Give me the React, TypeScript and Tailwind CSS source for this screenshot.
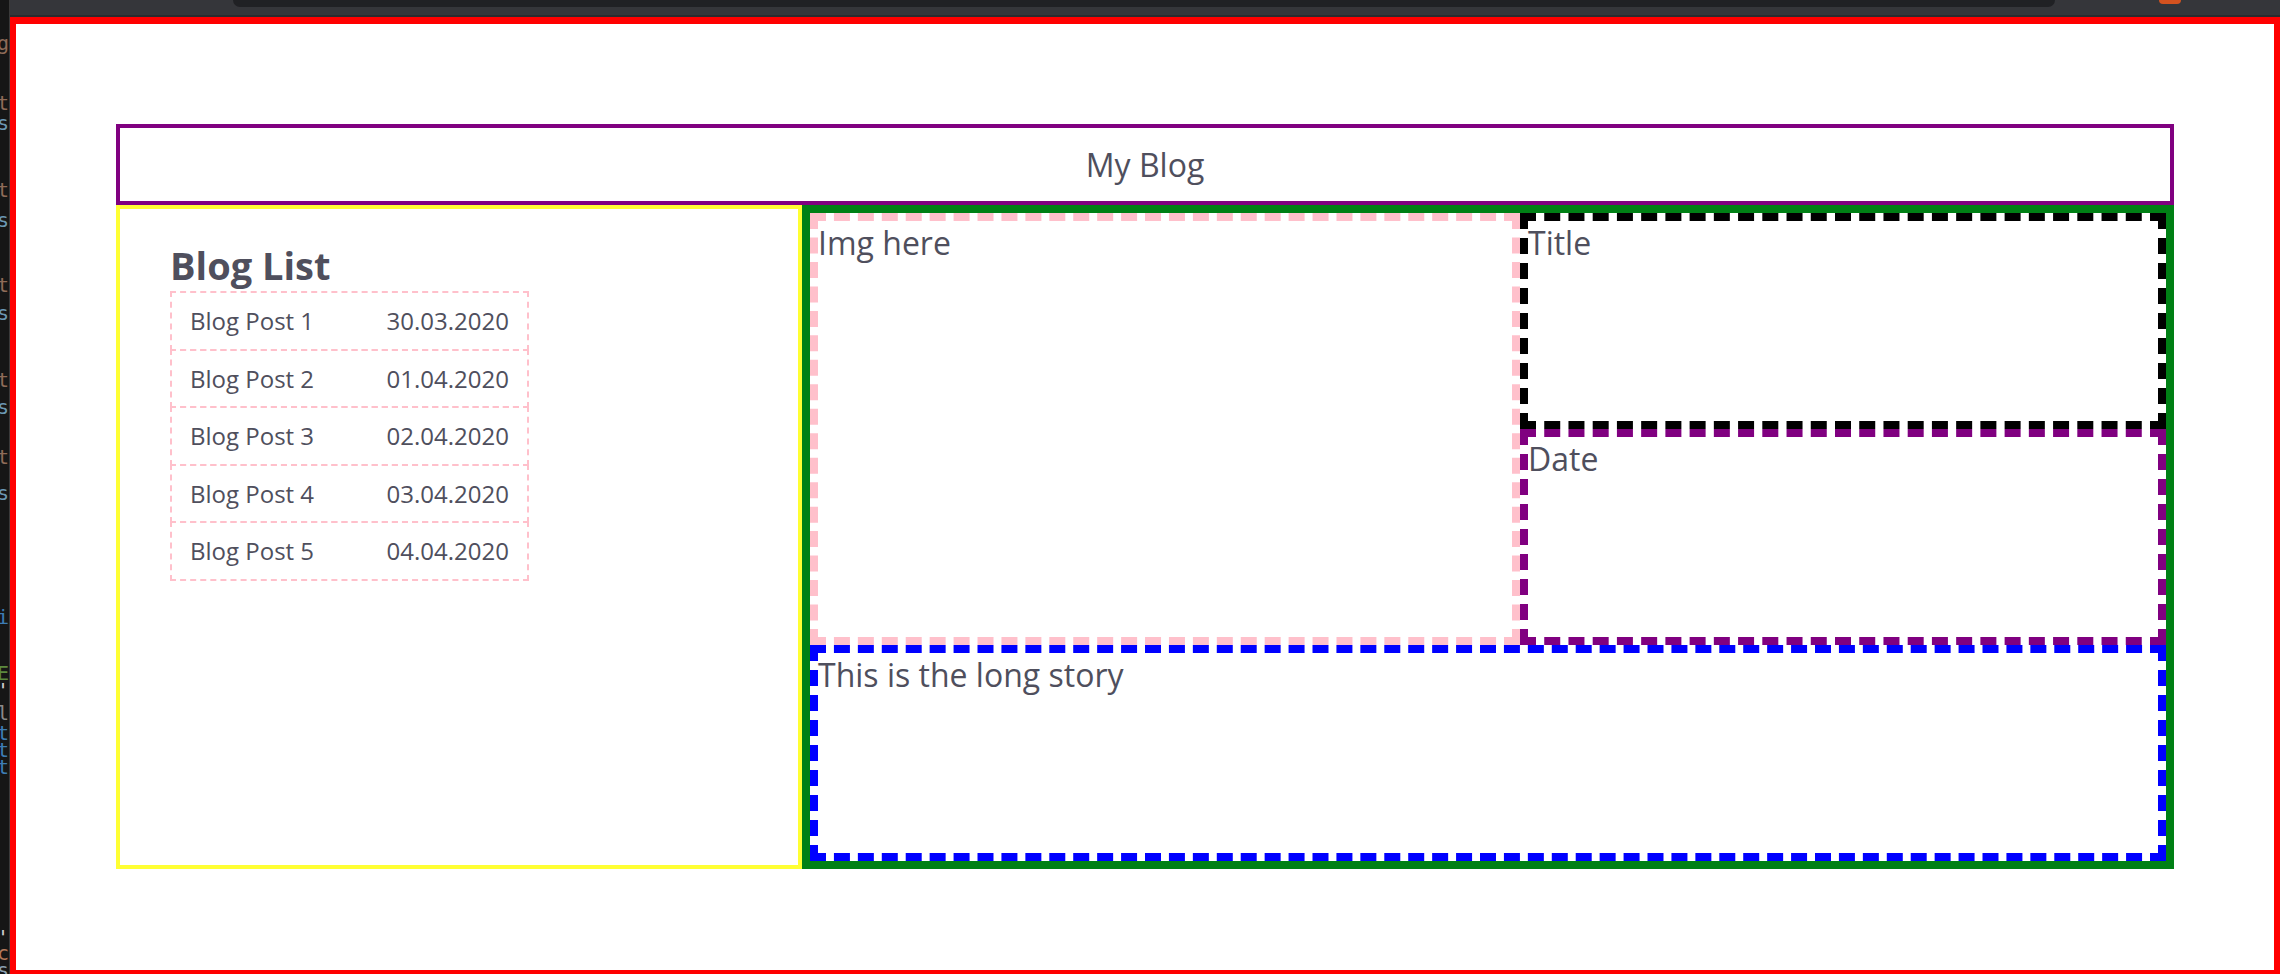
import React from 'react';

const codeMarks: { gap: number; text: string; color: string }[] = [
    { gap: 35, text: 'log', color: 'text-[#8f6b58]' },
    { gap: 44, text: 'out', color: 'text-[#8f6b58]' },
    { gap: 4, text: 'ns', color: 'text-[#6b98b3]' },
    { gap: 51, text: 'out', color: 'text-[#8f6b58]' },
    { gap: 14, text: 'ns', color: 'text-[#6b98b3]' },
    { gap: 49, text: 'out', color: 'text-[#8f6b58]' },
    { gap: 12, text: 'ns', color: 'text-[#6b98b3]' },
    { gap: 51, text: 'out', color: 'text-[#8f6b58]' },
    { gap: 11, text: 'ns', color: 'text-[#6b98b3]' },
    { gap: 34, text: 'out', color: 'text-[#8f6b58]' },
    { gap: 20, text: 'ns', color: 'text-[#6b98b3]' },
    { gap: 108, text: 'ai', color: 'text-[#3d7cb4]' },
    { gap: 40, text: 'NE', color: 'text-[#5d8a3e]' },
    { gap: 1, text: ":'", color: 'text-[#cfcfcf]' },
    { gap: 7, text: 'l', color: 'text-[#8a8a8a]' },
    { gap: 4, text: 'xt', color: 'text-[#3d7cb4]' },
    { gap: 1, text: 'nt', color: 'text-[#3d7cb4]' },
    { gap: 1, text: 'rt', color: 'text-[#3d7cb4]' },
    { gap: 154, text: ":'", color: 'text-[#cfcfcf]' },
    { gap: 0, text: 'oc', color: 'text-[#b3785a]' },
    { gap: 1, text: 'ss', color: 'text-[#8aa0b0]' },
];

const posts = [
    { title: 'Blog Post 1', date: '30.03.2020' },
    { title: 'Blog Post 2', date: '01.04.2020' },
    { title: 'Blog Post 3', date: '02.04.2020' },
    { title: 'Blog Post 4', date: '03.04.2020' },
    { title: 'Blog Post 5', date: '04.04.2020' },
];

// sliver of the code editor peeking out on the left
const CodeStrip: React.FC = () => (
    <div className="flex w-[10px] shrink-0 flex-col overflow-hidden border-r border-r-[#3a3a3a] bg-[#161616] font-['DejaVu_Sans_Mono',monospace] text-[20px] leading-[16px]">
        {codeMarks.map((m, i) => (
            <div key={i} className={`flex justify-end whitespace-nowrap ${m.color}`} style={{ marginTop: m.gap }}>
                {m.text}
            </div>
        ))}
    </div>
);

const TopBar: React.FC = () => (
    <div className="flex h-[17px] shrink-0 items-start border-b-2 border-b-[#2a2b2e] bg-[#35363a]">
        <div className="ml-[223px] h-[7px] w-[1822px] rounded-b-[10px] bg-[#202124]" />
        <div className="ml-[104px] h-[4px] w-[22px] rounded-b-full bg-[#d4521f]" />
    </div>
);

const BlogList: React.FC = () => (
    <div className="h-full border-4 border-[#ffff33] pl-[50px] pt-[30px]">
        <h2 className="text-[38px] font-bold leading-[normal]">Blog List</h2>
        <div className="w-[359px]">
            {posts.map((p) => (
                <div key={p.title} className="-mt-[2px] flex h-[59.5px] items-center justify-between border-2 border-dashed border-[#ffc0cb] px-[18px] text-[24px] leading-[normal] first:mt-0">
                    <span>{p.title}</span>
                    <span>{p.date}</span>
                </div>
            ))}
        </div>
    </div>
);

const PostView: React.FC = () => (
    <div className="grid h-full grid-cols-[710px_1fr] grid-rows-[216px_216px_216px] border-8 border-[#008015] text-[32px] leading-[normal]">
        <div className="row-span-2 border-8 border-dashed border-[#ffc0cb]">Img here</div>
        <div className="border-8 border-dashed border-black">Title</div>
        <div className="border-8 border-dashed border-[#800080]">Date</div>
        <div className="col-span-2 border-8 border-dashed border-[#0000ff]">This is the long story</div>
    </div>
);

export default function App() {
    return (
        <div className="flex h-[974px] w-[2280px] overflow-hidden bg-[#161616] font-['Open_Sans',sans-serif] text-[#4f4f5d]">
            <CodeStrip />
            <div className="flex min-w-0 flex-1 flex-col">
                <TopBar />
                <main className="flex-1 border-x-[6px] border-b-4 border-t-[7px] border-[#ff0000] bg-white px-[100px] pt-[100px]">
                    <header className="flex h-[81px] items-center justify-center border-4 border-[#800080] text-[32px] leading-[normal]">
                        My Blog
                    </header>
                    <div className="grid h-[664px] grid-cols-[1fr_2fr]">
                        <BlogList />
                        <PostView />
                    </div>
                </main>
            </div>
        </div>
    );
}
